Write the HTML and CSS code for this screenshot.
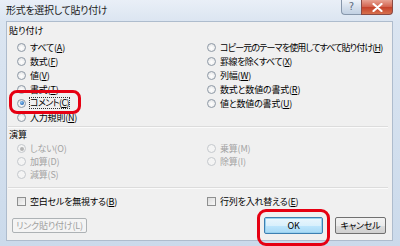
FILE: index.html
```html
<!DOCTYPE html>
<html lang="ja">
<head>
<meta charset="utf-8">
<link rel="stylesheet" href="styles.css">
</head>
<body>
<div class="window">
  <div class="titlebar">
    <span class="title">形式を選択して貼り付け</span>
    <div class="caption">
      <div class="cap-help">?</div>
      <div class="cap-close">
        <svg width="11" height="9" viewBox="0 0 11 9"><path d="M1.5 1 L9.5 8 M9.5 1 L1.5 8" stroke="#fff" stroke-width="2.2" stroke-linecap="round"/></svg>
      </div>
    </div>
  </div>
  <div class="client">
    <div class="group-label">貼り付け</div>
    <div class="opts">
      <div class="col">
        <div class="opt"><span class="radio"></span><span>すべて(<u>A</u>)</span></div>
        <div class="opt"><span class="radio"></span><span>数式(<u>F</u>)</span></div>
        <div class="opt"><span class="radio"></span><span>値(<u>V</u>)</span></div>
        <div class="opt"><span class="radio"></span><span>書式(<u>T</u>)</span></div>
        <div class="opt"><span class="radio on"></span><span class="focus">コメント(<u>C</u>)</span></div>
        <div class="opt"><span class="radio"></span><span>入力規則(<u>N</u>)</span></div>
      </div>
      <div class="col">
        <div class="opt"><span class="radio"></span><span class="tight">コピー元のテーマを使用してすべて貼り付け(<u>H</u>)</span></div>
        <div class="opt"><span class="radio"></span><span class="tight2">罫線を除くすべて(<u>X</u>)</span></div>
        <div class="opt"><span class="radio"></span><span>列幅(<u>W</u>)</span></div>
        <div class="opt"><span class="radio"></span><span>数式と数値の書式(<u>R</u>)</span></div>
        <div class="opt"><span class="radio"></span><span>値と数値の書式(<u>U</u>)</span></div>
      </div>
    </div>
    <div class="sep"></div>
    <div class="group-label">演算</div>
    <div class="opts ops">
      <div class="col">
        <div class="opt dis"><span class="radio on"></span><span>しない(O)</span></div>
        <div class="opt dis"><span class="radio"></span><span>加算(D)</span></div>
        <div class="opt dis"><span class="radio"></span><span>減算(S)</span></div>
      </div>
      <div class="col">
        <div class="opt dis"><span class="radio"></span><span>乗算(M)</span></div>
        <div class="opt dis"><span class="radio"></span><span>除算(I)</span></div>
      </div>
    </div>
    <div class="sep sep2"></div>
    <div class="opts checks">
      <div class="col">
        <div class="opt"><span class="check"></span><span>空白セルを無視する(<u>B</u>)</span></div>
      </div>
      <div class="col">
        <div class="opt"><span class="check"></span><span>行列を入れ替える(<u>E</u>)</span></div>
      </div>
    </div>
    <div class="buttons">
      <div class="btn btn-link">リンク貼り付け(L)</div>
      <div class="spacer"></div>
      <div class="btn btn-ok">OK</div>
      <div class="btn btn-cancel">キャンセル</div>
    </div>
  </div>
  <div class="annot annot-1"></div>
  <div class="annot annot-2"></div>
</div>
</body>
</html>
```
FILE: styles.css
```css
html, body {
  margin: 0;
  padding: 0;
}
body {
  width: 400px;
  height: 246px;
  overflow: hidden;
  font-family: "Noto Sans CJK JP", "Noto Sans", sans-serif;
  font-size: 9px;
  font-feature-settings: "palt";
  color: #000;
}
.window {
  position: relative;
  width: 400px;
  height: 246px;
  box-sizing: border-box;
  background: linear-gradient(to bottom, #e9eff7 0px, #dbe5f1 22px, #cbdaeb 246px);
  display: flex;
  flex-direction: column;
}
.titlebar {
  height: 21px;
  display: flex;
  align-items: flex-start;
  justify-content: space-between;
  flex: none;
}
.title {
  font-size: 10px;
  line-height: 12px;
  padding: 4px 0 0 6px;
  color: #1a1a1a;
  letter-spacing: -0.3px;
}
.caption {
  display: flex;
  margin-right: 7px;
}
.cap-help {
  width: 20px;
  height: 15px;
  box-sizing: border-box;
  border: 1px solid #8797ab;
  border-top: none;
  border-right: none;
  border-radius: 0 0 0 4px;
  background: linear-gradient(to bottom, #eef3f9, #d3deeb 55%, #c2d1e3);
  color: #5d6b7d;
  font-family: "DejaVu Sans", sans-serif;
  font-size: 10px;
  line-height: 14px;
  text-align: center;
}
.cap-close {
  width: 32px;
  height: 15px;
  box-sizing: border-box;
  border: 1px solid #8a4a44;
  border-top: none;
  border-radius: 0 0 4px 0;
  background: linear-gradient(to bottom, #e8a393, #d2624d 50%, #c5412a 51%, #d6714e);
  display: flex;
  align-items: center;
  justify-content: center;
}
.client {
  flex: 1;
  margin: 0 7px 5px 6px;
  border: 1px solid #aebccd;
  background: #f0f0f0;
  display: flex;
  flex-direction: column;
  padding: 2px 0 0 1px;
}
.group-label {
  line-height: 14px;
  padding-left: 1px;
}
.opts {
  display: grid;
  grid-template-columns: 190px 1fr;
  padding-left: 9px;
  margin-top: 2px;
}
.col {
  display: flex;
  flex-direction: column;
}
.opt {
  display: flex;
  align-items: center;
  height: 14px;
  gap: 4px;
  white-space: nowrap;
  letter-spacing: -0.2px;
}
.tight {
  letter-spacing: -0.85px;
}
.tight2 {
  letter-spacing: -0.5px;
}
.ops {
  margin-top: 0;
}
.ops .opt {
  height: 13px;
}
.opt.dis {
  color: #a3a3a3;
}
.radio {
  width: 9px;
  height: 9px;
  box-sizing: border-box;
  border-radius: 50%;
  border: 1px solid #8f9aa6;
  background: radial-gradient(circle at 50% 60%, #ffffff 0, #f4f4f4 40%, #d6d9dd 100%);
  display: flex;
  align-items: center;
  justify-content: center;
  flex: none;
}
.radio.on::after {
  content: "";
  width: 4px;
  height: 4px;
  border-radius: 50%;
  background: radial-gradient(circle at 40% 35%, #8fc3f0, #2a6fba 70%, #1b4f8f);
}
.dis .radio {
  border-color: #c4c8cc;
  background: #f4f4f4;
}
.dis .radio.on::after {
  background: #b4b4b4;
}
.focus {
  outline: 1px dotted #333;
  outline-offset: 0;
  line-height: 10px;
  letter-spacing: -0.6px;
}
.sep {
  height: 1px;
  background: #dcdcdc;
  border-bottom: 1px solid #fbfbfb;
  margin: 2px 4px 0 0;
}
.sep2 {
  margin-top: 6px;
}
.checks {
  margin-top: 5px;
}
.check {
  width: 9px;
  height: 9px;
  box-sizing: border-box;
  border: 1px solid #8e8f8f;
  background: linear-gradient(135deg, #dcdcdc, #f8f8f8);
  flex: none;
}
.buttons {
  display: flex;
  align-items: flex-start;
  margin-top: auto;
  padding: 0 6px 6px 4px;
}
.spacer {
  flex: 1;
}
.btn {
  height: 17px;
  box-sizing: border-box;
  border: 1px solid #707070;
  border-radius: 2px;
  background: linear-gradient(to bottom, #f2f2f2 0, #ebebeb 50%, #dddddd 51%, #cfcfcf 100%);
  display: flex;
  align-items: center;
  justify-content: center;
  line-height: 15px;
  letter-spacing: -0.2px;
}
.btn-link {
  width: 75px;
  border-color: #adb2b5;
  background: #f4f4f4;
  color: #a0a0a0;
  margin-top: 1px;
  height: 15px;
}
.btn-ok {
  width: 59px;
  border-color: #3c7fb1;
  box-shadow: inset 0 0 0 1px #98d1ef;
  background: linear-gradient(to bottom, #eaf6fd 0, #d9f0fc 50%, #bee6fd 51%, #a7d9f5 100%);
}
.btn-cancel {
  width: 51px;
  margin-left: 12px;
}
.annot {
  position: absolute;
  box-sizing: border-box;
  border: 3px solid #e60012;
  border-radius: 8px;
}
.annot-1 {
  left: 9px;
  top: 90px;
  width: 72px;
  height: 24px;
}
.annot-2 {
  left: 257px;
  top: 209px;
  width: 73px;
  height: 37px;
  border-radius: 9px;
}
```
